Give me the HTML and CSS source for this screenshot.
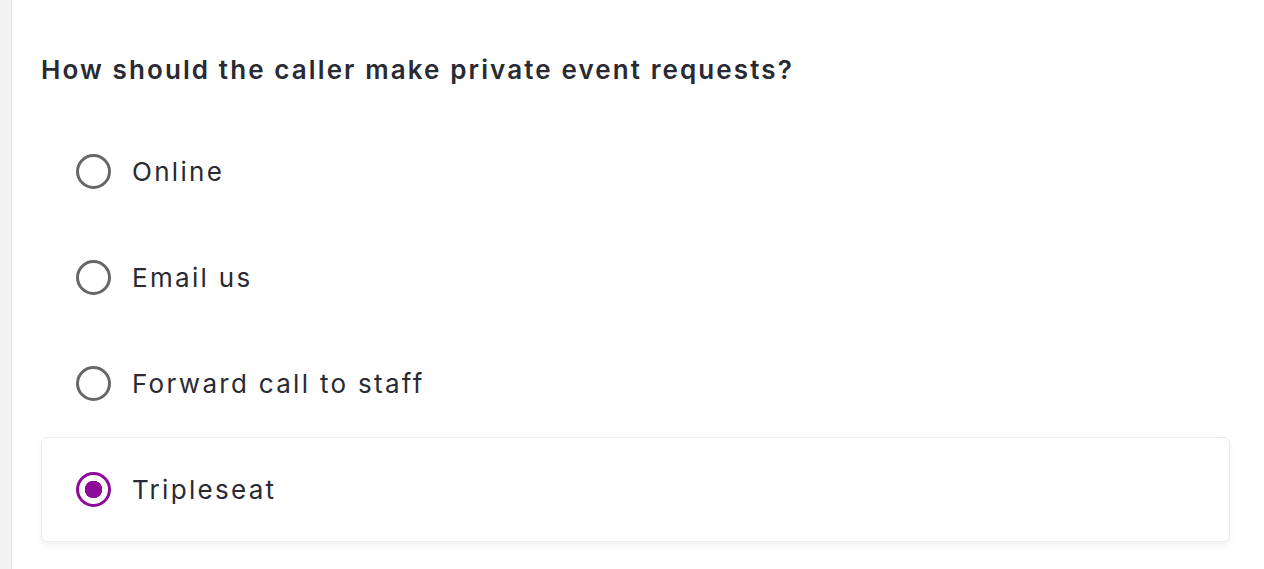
FILE: index.html
```html
<!DOCTYPE html>
<html lang="en">
<head>
<meta charset="utf-8">
<title>Private event requests</title>
<link rel="stylesheet" href="styles.css">
</head>
<body>
<div class="page">
  <div class="rail"></div>
  <main class="content">
    <h1 class="question">How should the caller make private event requests?</h1>
    <div class="options" role="radiogroup">
      <div class="option"><span class="radio"></span><span class="label">Online</span></div>
      <div class="option"><span class="radio"></span><span class="label">Email us</span></div>
      <div class="option"><span class="radio"></span><span class="label">Forward call to staff</span></div>
      <div class="option selected"><span class="radio"></span><span class="label">Tripleseat</span></div>
    </div>
  </main>
</div>
</body>
</html>
```
FILE: styles.css
```css
* { box-sizing: border-box; }
html, body { margin: 0; padding: 0; background: #ffffff; }
body {
  font-family: Inter, "Noto Sans", "Liberation Sans", sans-serif;
  color: #292a33;
  height: 569px;
  overflow: hidden;
}
.page { display: flex; min-height: 569px; }
.rail {
  width: 12px;
  flex: 0 0 12px;
  background: #f3f1f3;
  border-right: 1px solid #e3e1e3;
}
.content {
  flex: 1;
  padding: 50px 34px 0 29px;
}
.question {
  margin: 0;
  font-size: 26px;
  font-weight: 600;
  line-height: 40px;
  letter-spacing: 2.1px;
}
.options {
  display: flex;
  flex-direction: column;
  gap: 1px;
  margin-top: 29px;
}
.option {
  display: flex;
  align-items: center;
  height: 105px;
  padding-left: 34px;
  border: 1px solid transparent;
  border-radius: 6px;
}
.option.selected {
  border-color: #ebebeb;
  box-shadow: 0 4px 6px rgba(0, 0, 0, 0.05);
}
.radio {
  width: 35px;
  height: 35px;
  border: 3px solid #676767;
  border-radius: 50%;
  flex: 0 0 35px;
  margin-right: 21px;
}
.option.selected .radio {
  border-color: #8e0b99;
  background: radial-gradient(circle, #8e0b99 0 8.5px, transparent 9px);
}
.label {
  font-size: 26px;
  font-weight: 400;
  letter-spacing: 2.3px;
}
```
